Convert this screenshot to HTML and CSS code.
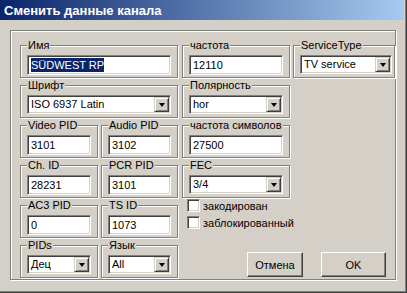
FILE: index.html
```html
<!DOCTYPE html>
<html lang="ru">
<head>
    <meta charset="UTF-8">
    <title>Сменить данные канала</title>
    <link rel="stylesheet" href="styles.css">
</head>
<body>
    <div class="window">
        <div class="titlebar">Сменить данные канала</div>

        <div class="panel">
            <div class="grid">
                <!-- row 1 -->
                <fieldset class="gb wide">
                    <legend>Имя</legend>
                    <div class="edit"><span class="selected">SÜDWEST RP</span></div>
                </fieldset>
                <fieldset class="gb col-c">
                    <legend>частота</legend>
                    <div class="edit">12110</div>
                </fieldset>
                <fieldset class="gb col-d">
                    <legend>ServiceType</legend>
                    <div class="combo"><span class="value">TV service</span><span class="drop"></span></div>
                </fieldset>

                <!-- row 2 -->
                <fieldset class="gb wide">
                    <legend>Шрифт</legend>
                    <div class="combo"><span class="value">ISO 6937 Latin</span><span class="drop"></span></div>
                </fieldset>
                <fieldset class="gb col-c">
                    <legend>Полярность</legend>
                    <div class="combo"><span class="value">hor</span><span class="drop"></span></div>
                </fieldset>
                <div class="blank"></div>

                <!-- row 3 -->
                <fieldset class="gb">
                    <legend>Video PID</legend>
                    <div class="edit">3101</div>
                </fieldset>
                <fieldset class="gb">
                    <legend>Audio PID</legend>
                    <div class="edit">3102</div>
                </fieldset>
                <fieldset class="gb col-c">
                    <legend>частота символов</legend>
                    <div class="edit">27500</div>
                </fieldset>
                <div class="blank"></div>

                <!-- row 4 -->
                <fieldset class="gb">
                    <legend>Ch. ID</legend>
                    <div class="edit">28231</div>
                </fieldset>
                <fieldset class="gb">
                    <legend>PCR PID</legend>
                    <div class="edit">3101</div>
                </fieldset>
                <fieldset class="gb col-c">
                    <legend>FEC</legend>
                    <div class="combo"><span class="value">3/4</span><span class="drop"></span></div>
                </fieldset>
                <div class="blank"></div>

                <!-- row 5 -->
                <fieldset class="gb">
                    <legend>AC3 PID</legend>
                    <div class="edit">0</div>
                </fieldset>
                <fieldset class="gb">
                    <legend>TS ID</legend>
                    <div class="edit">1073</div>
                </fieldset>
                <div class="checks">
                    <div class="check"><span class="box"></span><span class="caption">закодирован</span></div>
                    <div class="check"><span class="box"></span><span class="caption">заблокированный</span></div>
                </div>
                <div class="blank"></div>

                <!-- row 6 -->
                <fieldset class="gb">
                    <legend>PIDs</legend>
                    <div class="combo"><span class="value">Дец</span><span class="drop"></span></div>
                </fieldset>
                <fieldset class="gb">
                    <legend>Язык</legend>
                    <div class="combo"><span class="value">All</span><span class="drop"></span></div>
                </fieldset>
                <div class="buttons">
                    <button class="btn cancel">Отмена</button>
                    <button class="btn ok">OK</button>
                </div>
            </div>
        </div>
    </div>
</body>
</html>
```

FILE: styles.css
```css
body {
    margin: 0;
    background: #d4d0c8;
    font-family: "Liberation Sans", Arial, sans-serif;
    font-size: 11px;
    color: #000;
}
.window {
    width: 407px;
    height: 293px;
    box-sizing: border-box;
    background: #d4d0c8;
    border-right: 1px solid #404040;
    border-bottom: 1px solid #404040;
    box-shadow: inset -1px -1px 0 #808080;
    overflow: hidden;
}
.titlebar {
    width: 404px;
    height: 20px;
    box-sizing: border-box;
    padding: 3px 0 0 4px;
    background: linear-gradient(to right, #0a246a, #a6caf0);
    color: #fff;
    font-weight: bold;
    font-size: 13px;
    line-height: 15px;
    white-space: nowrap;
}
/* etched frame around the whole form */
.panel {
    margin: 10px 0 0 10px;
    width: 386px;
    height: 250px;
    box-sizing: border-box;
    border: 1px solid #808080;
    box-shadow: 1px 1px 0 #fff, inset 1px 1px 0 #fff;
    padding: 8px 0 0 9px;
}
.grid {
    display: grid;
    grid-template-columns: 78px 77px 109px 102px;
    grid-auto-rows: 39px;
    column-gap: 3px;
    row-gap: 1px;
}
.wide {
    grid-column: span 2;
}
/* group boxes */
.gb {
    margin: 0;
    padding: 3px 6px 0;
    min-width: 0;
    border: 1px solid #808080;
    box-shadow: 1px 1px 0 #fff, inset 1px 1px 0 #fff;
}
.gb legend {
    padding: 0 1px;
    margin: 0;
    line-height: 13px;
    background: #d4d0c8;
}
.col-c {
    margin-left: 1px;
}
.col-d {
    padding-right: 2px;
}
/* edit fields */
.edit, .combo {
    height: 20px;
    box-sizing: border-box;
    background: #fff;
    border: 1px solid;
    border-color: #808080 #fff #fff #808080;
    box-shadow: inset 1px 1px 0 #404040, inset -1px -1px 0 #d4d0c8;
    padding: 0 3px;
    line-height: 18px;
    white-space: nowrap;
    overflow: hidden;
}
.selected {
    background: #0a246a;
    color: #fff;
    padding: 1px 0;
}
.combo {
    height: 19px;
    line-height: 17px;
    display: flex;
    padding: 0 0 0 3px;
}
.combo .value {
    flex: 1;
}
.drop {
    width: 15px;
    height: 15px;
    margin: 1px 1px 0 0;
    box-sizing: border-box;
    background: #d4d0c8;
    border: 1px solid;
    border-color: #d4d0c8 #404040 #404040 #d4d0c8;
    box-shadow: inset 1px 1px 0 #fff, inset -1px -1px 0 #808080;
    display: flex;
    align-items: center;
    justify-content: center;
}
.drop::after {
    content: "";
    border-left: 3.5px solid transparent;
    border-right: 3.5px solid transparent;
    border-top: 4px solid #000;
}
/* check boxes */
.checks {
    margin-left: 1px;
    padding-left: 5px;
    display: flex;
    flex-direction: column;
    gap: 4px;
}
.check {
    display: flex;
    align-items: center;
    height: 13px;
}
.box {
    flex: none;
    width: 13px;
    height: 13px;
    box-sizing: border-box;
    background: #fff;
    border: 1px solid;
    border-color: #808080 #fff #fff #808080;
    box-shadow: inset 1px 1px 0 #404040, inset -1px -1px 0 #d4d0c8;
}
.caption {
    margin-left: 3px;
    white-space: nowrap;
}
/* buttons */
.buttons {
    grid-column: span 2;
    display: flex;
    justify-content: flex-end;
    align-items: flex-start;
    gap: 18px;
    padding: 13px 9px 0 0;
}
.btn {
    height: 25px;
    box-sizing: border-box;
    background: #d4d0c8;
    border: 1px solid;
    border-color: #fff #404040 #404040 #fff;
    box-shadow: inset -1px -1px 0 #808080;
    font-family: "Liberation Sans", Arial, sans-serif;
    font-size: 11px;
    color: #000;
    padding: 0;
}
.cancel {
    width: 56px;
}
.ok {
    width: 65px;
}
```
